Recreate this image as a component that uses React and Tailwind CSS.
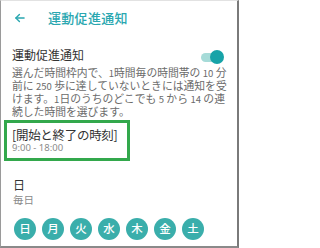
import React from "react";

const days = ["日", "月", "火", "水", "木", "金", "土"];

export default function App() {
  return (
    <div
      className="w-[239px] h-[248px] bg-white border-l border-l-[#9a9a9a] border-r-2 border-r-[#7a7a7a] border-b-2 border-b-[#8a8a8a] border-t border-t-[#e2e2e2] overflow-hidden"
      style={{ fontFamily: '"Noto Sans CJK JP", "Noto Sans", sans-serif' }}
    >
      <div className="h-[33px] flex items-center pl-[12px]">
        <svg width="14" height="14" viewBox="0 0 24 24" fill="none" stroke="#2aa7b0" strokeWidth="2.4" strokeLinecap="round" strokeLinejoin="round">
          <path d="M19 12H5" />
          <path d="M11 6l-6 6 6 6" />
        </svg>
        <span className="ml-[21px] text-[13px] leading-none font-medium text-[#2aa7b0] tracking-[0.3px]">運動促進通知</span>
      </div>

      <div className="px-[11px] pt-[13px]">
        <div className="flex items-center justify-between h-[16px]">
          <span className="text-[12px] leading-none text-[#333]">運動促進通知</span>
          <div className="relative w-[24px] h-[14px] mr-[2px] mt-[4px]">
            <div className="absolute left-[1px] top-[3px] w-[20px] h-[9px] rounded-full bg-[#a6dbd8]" />
            <div className="absolute right-0 top-0 w-[14px] h-[14px] rounded-full bg-[#17a3a8]" />
          </div>
        </div>
        <div className="mt-[3px] text-[10.8px] leading-[12px] text-[#6b6b6b] whitespace-nowrap">
          <div>選んだ時間枠内で、<span className="text-[9.5px]">1</span>時間毎の時間帯の <span className="text-[9.5px]">10</span> 分</div>
          <div>前に <span className="text-[9.5px]">250</span> 歩に達していないときには通知を受</div>
          <div>けます。<span className="text-[9.5px]">1</span>日のうちのどこでも <span className="text-[9.5px]">5</span> から <span className="text-[9.5px]">14</span> の連</div>
          <div>続した時間を選びます。</div>
        </div>
      </div>

      <div className="ml-[3px] mt-[3px] w-[126px] h-[41px] border-[3px] border-[#33a84c] pl-[5px] pt-[4px]">
        <div className="text-[12.5px] leading-[15px] text-[#333] tracking-[-0.3px]">[開始と終了の時刻]</div>
        <div className="text-[9.5px] leading-[12px] text-[#8a8a8a]" style={{ fontFamily: '"Noto Sans", sans-serif' }}>9:00 - 18:00</div>
      </div>

      <div className="px-[12px] pt-[17px]">
        <div className="text-[12px] leading-[14px] text-[#333]">日</div>
        <div className="text-[10.5px] leading-[13px] text-[#8a8a8a] mt-[1px]">毎日</div>
        <div className="flex gap-[6px] mt-[12px] ml-[1px]">
          {days.map((d) => (
            <div key={d} className="w-[22px] h-[22px] rounded-full bg-[#3aaeab] flex items-center justify-center text-white text-[11.5px] leading-none font-medium">
              {d}
            </div>
          ))}
        </div>
      </div>
    </div>
  );
}
